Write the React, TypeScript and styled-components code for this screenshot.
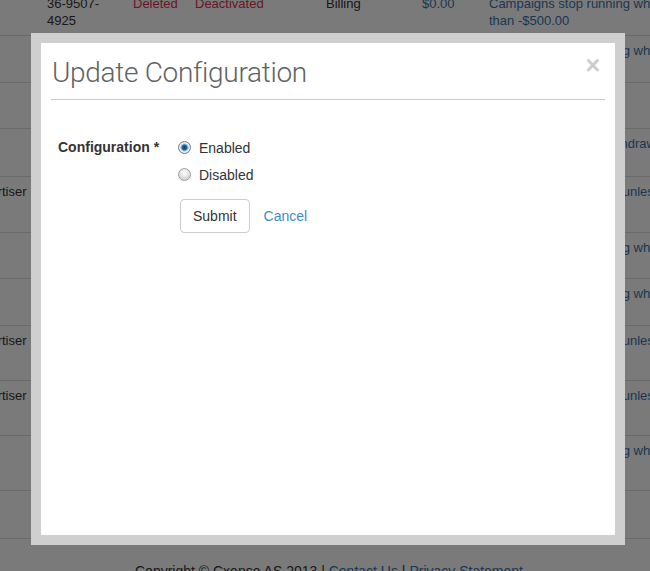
import React from 'react'
import styled, { createGlobalStyle } from 'styled-components'

const Global = createGlobalStyle`
  html, body {
    margin: 0;
    padding: 0;
    background: #fff;
    font-family: "Liberation Sans", Arial, sans-serif;
    color: #333;
  }
  * { box-sizing: border-box; }
`

const Page = styled.div`
  width: 650px;
  height: 571px;
  overflow: hidden;
  font-size: 13px;
`
const Table = styled.table`
  border-collapse: collapse;
  margin: -11px 0 0 -40px;
  table-layout: fixed;
  width: 817px;
`
const Row = styled.tr<{ $h: number }>`
  height: ${p => p.$h}px;
  border-bottom: 1px solid #ddd;
`
const Cell = styled.td<{ $w: number; $tone?: 'danger' | 'link' }>`
  width: ${p => p.$w}px;
  padding: 6px 8px;
  line-height: 17px;
  vertical-align: top;
  color: ${p => (p.$tone === 'danger' ? '#d9304f' : p.$tone === 'link' ? '#3a72ab' : '#333')};
`
const Footer = styled.div`
  padding-top: 22px;
  text-align: center;
  font-size: 14px;
  line-height: 20px;
  color: #333;
  margin-left: 8px;
  a { color: #3a72ab; text-decoration: none; }
`

const Backdrop = styled.div`
  position: fixed;
  inset: 0;
  background: rgba(0, 0, 0, 0.52);
`
const Modal = styled.div`
  position: fixed;
  top: 33px;
  left: 31px;
  width: 594px;
  height: 512px;
  border: 10px solid #cfcfcf;
  background: #fff;
  display: flex;
  flex-direction: column;
`
const Header = styled.div`
  margin: 0 10px;
  padding: 10px 0 6px 1px;
  border-bottom: 1px solid #cccccc;
  display: flex;
  justify-content: space-between;
  align-items: flex-start;
`
const Title = styled.h2`
  margin: 0;
  font-family: Roboto, "Liberation Sans", sans-serif;
  font-weight: 300;
  font-size: 28px;
  letter-spacing: -0.3px;
  line-height: 40px;
  color: #626262;
`
const Close = styled.button`
  border: 0;
  background: transparent;
  padding: 0;
  margin: 0 5px 0 0;
  font-family: "Liberation Sans", Arial, sans-serif;
  font-size: 25px;
  font-weight: bold;
  line-height: 24px;
  color: #cccccc;
  cursor: pointer;
`
const Form = styled.form`
  margin-top: 34px;
  padding-left: 17px;
  display: grid;
  grid-template-columns: 120px 1fr;
  font-size: 14px;
  color: #333;
`
const Label = styled.label`
  font-weight: bold;
  line-height: 27px;
`
const Options = styled.div`
  display: flex;
  flex-direction: column;
`
const Option = styled.label`
  display: flex;
  align-items: center;
  gap: 8px;
  height: 27px;
  cursor: pointer;
`
const Radio = styled.span<{ $checked?: boolean }>`
  width: 13px;
  height: 13px;
  border-radius: 50%;
  border: 1px solid ${p => (p.$checked ? '#6f7a86' : '#a0a0a0')};
  background: ${p =>
    p.$checked
      ? 'radial-gradient(circle, #123f66 0, #2469a6 2.5px, #9fc2e0 3.5px, #eef2f6 4.5px, #dfe4e9 6px)'
      : 'radial-gradient(circle at 50% 35%, #ffffff 0, #ececec 3px, #d2d2d2 6.5px)'};
  flex: none;
`
const Actions = styled.div`
  display: flex;
  align-items: center;
  gap: 1px;
  margin: 11px 0 0 2px;
`
const Button = styled.button<{ $link?: boolean }>`
  font-family: "Liberation Sans", Arial, sans-serif;
  font-size: 14px;
  line-height: 20px;
  padding: 6px 12px;
  border-radius: 4px;
  border: 1px solid ${p => (p.$link ? 'transparent' : '#cccccc')};
  background: #fff;
  color: ${p => (p.$link ? '#428bca' : '#333')};
  cursor: pointer;
`

const rows: { h: number; c: string[] }[] = [
  { h: 46, c: ['', '36-9507-4925', 'Deleted', 'Deactivated', 'Billing', '$0.00', 'Campaigns stop running when balance is less than -$500.00'] },
  { h: 47, c: ['', '', '', '', '', '', 'Campaigns stop running when balance is low'] },
  { h: 46, c: ['', '', '', '', '', '', ''] },
  { h: 48, c: ['', '', '', '', '', '', 'Campaigns stop on withdrawal'] },
  { h: 56, c: ['Advertiser', '', '', '', '', '', 'Campaigns never stop unless paused'] },
  { h: 46, c: ['', '', '', '', '', '', 'Campaigns stop running when balance is low'] },
  { h: 47, c: ['', '', '', '', '', '', 'Campaigns stop running when balance is low'] },
  { h: 55, c: ['Advertiser', '', '', '', '', '', 'Campaigns never stop unless paused'] },
  { h: 55, c: ['Advertiser', '', '', '', '', '', 'Campaigns never stop unless paused'] },
  { h: 55, c: ['', '', '', '', '', '', 'Campaigns stop running when balance is low'] },
  { h: 48, c: ['', '', '', '', '', '', ''] },
]
const widths = [79, 86, 62, 131, 96, 67, 296]

export default function App (): React.ReactElement {
  return (
    <>
      <Global />
      <Page>
        <Table>
          <tbody>
            {rows.map((r, i) => (
              <Row key={i} $h={r.h}>
                {r.c.map((t, j) => (
                  <Cell key={j} $w={widths[j]} $tone={j === 2 || j === 3 ? 'danger' : j >= 5 ? 'link' : undefined}>
                    {t}
                  </Cell>
                ))}
              </Row>
            ))}
          </tbody>
        </Table>
        <Footer>
          Copyright © Cxense AS 2013 | <a href="#">Contact Us</a> | <a href="#">Privacy Statement</a>
        </Footer>
      </Page>
      <Backdrop />
      <Modal>
        <Header>
          <Title>Update Configuration</Title>
          <Close type="button">×</Close>
        </Header>
        <Form>
          <Label>Configuration *</Label>
          <Options>
            <Option><Radio $checked />Enabled</Option>
            <Option><Radio />Disabled</Option>
            <Actions>
              <Button type="button">Submit</Button>
              <Button type="button" $link>Cancel</Button>
            </Actions>
          </Options>
        </Form>
      </Modal>
    </>
  )
}
